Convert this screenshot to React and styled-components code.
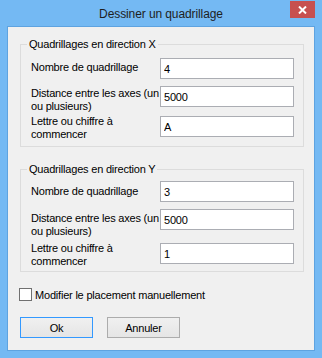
import React from "react";
import styled, { createGlobalStyle } from "styled-components";

const GlobalStyle = createGlobalStyle`
  html, body {
    margin: 0;
    padding: 0;
    width: 322px;
    height: 358px;
    overflow: hidden;
    font-family: "Liberation Sans", Arial, sans-serif;
  }
`;

const groups = [
  {
    title: "Quadrillages en direction X",
    padTop: 13,
    rows: [
      { label: "Nombre de quadrillage", value: "4", height: 28, labelTop: 3 },
      { label: "Distance entre les axes (un\nou plusieurs)", value: "5000", height: 30, labelTop: 1 },
      { label: "Lettre ou chiffre à\ncommencer", value: "A", height: 21, labelTop: -1 },
    ],
  },
  {
    title: "Quadrillages en direction Y",
    padTop: 11,
    rows: [
      { label: "Nombre de quadrillage", value: "3", height: 28, labelTop: 4 },
      { label: "Distance entre les axes (un\nou plusieurs)", value: "5000", height: 34, labelTop: 3 },
      { label: "Lettre ou chiffre à\ncommencer", value: "1", height: 21, labelTop: -1 },
    ],
  },
];

const CloseIcon = () => (
  <svg width="9" height="8" viewBox="0 0 9 8">
    <path d="M1 0.5 L8 7.5 M8 0.5 L1 7.5" stroke="#fff" strokeWidth="2" />
  </svg>
);

const App = () => {
  return (
    <Window>
      <GlobalStyle />
      <TitleBar>
        <span />
        <Title>Dessiner un quadrillage</Title>
        <CloseButton>
          <CloseIcon />
        </CloseButton>
      </TitleBar>
      <Client>
        {groups.map((group, gi) => (
          <GroupBox key={gi} $padTop={group.padTop} $first={gi === 0}>
            <Caption>{group.title}</Caption>
            {group.rows.map((row, ri) => (
              <Row key={ri} $height={row.height}>
                <Label $top={row.labelTop}>{row.label}</Label>
                <TextBox value={row.value} readOnly />
              </Row>
            ))}
          </GroupBox>
        ))}
        <CheckRow>
          <CheckBox />
          <CheckLabel>Modifier le placement manuellement</CheckLabel>
        </CheckRow>
        <Buttons>
          <Button $default>Ok</Button>
          <Button>Annuler</Button>
        </Buttons>
      </Client>
    </Window>
  );
};

const Window = styled.div`
  width: 322px;
  height: 358px;
  background-color: #74b9f3;
  display: flex;
  flex-direction: column;
  box-sizing: border-box;
`;

const TitleBar = styled.div`
  height: 26px;
  display: grid;
  grid-template-columns: 1fr auto 1fr;
  align-items: start;
`;

const Title = styled.div`
  font-size: 12px;
  line-height: 26px;
  padding-top: 1px;
  color: #1e1e1e;
  letter-spacing: -0.1px;
  white-space: nowrap;
`;

const CloseButton = styled.div`
  justify-self: end;
  margin: 1px 7px 0 0;
  width: 25px;
  height: 17px;
  background-color: #c75050;
  display: flex;
  align-items: center;
  justify-content: center;
`;

const Client = styled.div`
  margin: 0 7px;
  width: 308px;
  height: 325px;
  box-sizing: border-box;
  border: 1px solid #5ea3e0;
  background-color: #f0f0f0;
  padding: 17px 0 0 12px;
  display: flex;
  flex-direction: column;
  font-size: 11px;
  letter-spacing: -0.2px;
  color: #000;
`;

const GroupBox = styled.div`
  position: relative;
  width: 284px;
  height: 103px;
  box-sizing: border-box;
  border: 1px solid #dcdcdc;
  margin-top: ${(p) => (p.$first ? 0 : 22)}px;
  padding: ${(p) => p.$padTop}px 0 0 10px;
`;

const Caption = styled.span`
  position: absolute;
  top: -7px;
  left: 6px;
  padding: 0 2px;
  line-height: 13px;
  background-color: #f0f0f0;
  white-space: nowrap;
`;

const Row = styled.div`
  display: grid;
  grid-template-columns: 129px 134px;
  align-items: start;
  height: ${(p) => p.$height}px;
`;

const Label = styled.div`
  margin-top: ${(p) => p.$top}px;
  line-height: 13px;
  white-space: pre;
`;

const TextBox = styled.input`
  width: 134px;
  height: 21px;
  box-sizing: border-box;
  margin: 0;
  border: 1px solid #abadb3;
  border-radius: 0;
  padding: 0 0 0 3px;
  background-color: #fff;
  font-family: "Liberation Sans", Arial, sans-serif;
  font-size: 11px;
  letter-spacing: -0.2px;
  color: #000;
  outline: none;
`;

const CheckRow = styled.div`
  display: flex;
  align-items: center;
  gap: 3px;
  margin: 16px 0 0 -1px;
  height: 13px;
`;

const CheckBox = styled.span`
  width: 13px;
  height: 13px;
  box-sizing: border-box;
  border: 1px solid #707070;
  background-color: #fff;
`;

const CheckLabel = styled.span`
  line-height: 13px;
  padding-top: 1px;
  white-space: nowrap;
`;

const Buttons = styled.div`
  display: flex;
  gap: 14px;
  margin-top: 16px;
`;

const Button = styled.button`
  width: 73px;
  height: 21px;
  box-sizing: border-box;
  margin: 0;
  padding: 0;
  border: 1px solid ${(p) => (p.$default ? "#3399ff" : "#acacac")};
  border-radius: 0;
  background: linear-gradient(#f0f0f0, #e5e5e5);
  font-family: "Liberation Sans", Arial, sans-serif;
  font-size: 11px;
  letter-spacing: -0.2px;
  color: #000;
`;

export default App;
